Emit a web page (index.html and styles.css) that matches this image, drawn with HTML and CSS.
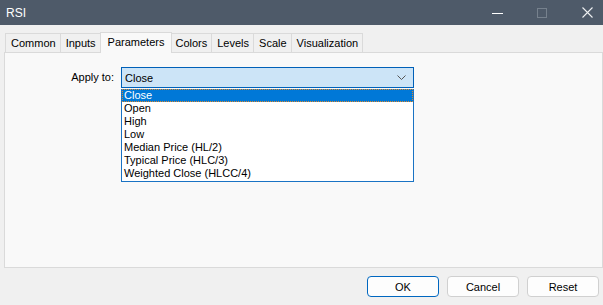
FILE: index.html
```html
<!DOCTYPE html>
<html lang="en">
<head>
    <meta charset="UTF-8">
    <title>RSI</title>
    <link rel="stylesheet" href="styles.css">
</head>
<body>
<div class="window">
    <div class="titlebar">
        <span class="title">RSI</span>
        <div class="controls">
            <span class="ctl ctl-min"></span>
            <span class="ctl ctl-max"></span>
            <svg class="ctl-close" width="11" height="11" viewBox="0 0 11 11">
                <path d="M0.5 0.5 L10.5 10.5 M10.5 0.5 L0.5 10.5" stroke="#eef0f2" stroke-width="1.1" fill="none"/>
            </svg>
        </div>
    </div>

    <div class="tabs">
        <div class="tab">Common</div>
        <div class="tab">Inputs</div>
        <div class="tab active">Parameters</div>
        <div class="tab">Colors</div>
        <div class="tab">Levels</div>
        <div class="tab">Scale</div>
        <div class="tab">Visualization</div>
    </div>

    <div class="panel">
        <div class="field">
            <label class="field-label">Apply to:</label>
            <div class="combo">
                <div class="combo-box">
                    <span>Close</span>
                    <svg class="chevron" width="9" height="5" viewBox="0 0 9 5">
                        <path d="M0.5 0.5 L4.5 4.5 L8.5 0.5" stroke="#555" stroke-width="1" fill="none"/>
                    </svg>
                </div>
                <ul class="combo-list">
                    <li class="selected">Close</li>
                    <li>Open</li>
                    <li>High</li>
                    <li>Low</li>
                    <li>Median Price (HL/2)</li>
                    <li>Typical Price (HLC/3)</li>
                    <li>Weighted Close (HLCC/4)</li>
                </ul>
            </div>
        </div>
    </div>

    <div class="footer">
        <button class="btn btn-default">OK</button>
        <button class="btn">Cancel</button>
        <button class="btn">Reset</button>
    </div>
</div>
</body>
</html>
```

FILE: styles.css
```css
body {
    margin: 0;
    padding: 0;
    font-family: "Liberation Sans", Arial, sans-serif;
    font-size: 11px;
    color: #000;
    background: #f0f0f0;
}

.window {
    width: 603px;
    height: 305px;
    display: flex;
    flex-direction: column;
    background: #f0f0f0;
    overflow: hidden;
}

.titlebar {
    height: 25px;
    background: #4e5a69;
    display: flex;
    align-items: center;
    justify-content: space-between;
    flex-shrink: 0;
}

.title {
    color: #fff;
    font-size: 12px;
    margin-left: 6px;
}

.controls {
    display: flex;
    align-items: center;
    margin-right: 10px;
}

.ctl {
    display: block;
}

.ctl-min {
    width: 11px;
    height: 1px;
    background: #fff;
    margin-right: 34px;
    margin-top: 2px;
}

.ctl-max {
    width: 8px;
    height: 8px;
    border: 1px solid #76818d;
    margin-right: 35px;
}

.ctl-close {
    display: block;
}

.tabs {
    display: flex;
    align-items: flex-end;
    height: 27px;
    padding-left: 5px;
    flex-shrink: 0;
}

.tab {
    height: 18px;
    line-height: 18px;
    padding: 0 4px 0 5px;
    border: 1px solid #dadada;
    border-bottom: none;
    border-left: none;
    background: #f0f0f0;
    white-space: nowrap;
}

.tab:first-child {
    border-left: 1px solid #dadada;
}

.tab.active {
    height: 20px;
    line-height: 18px;
    padding: 0 7px;
    margin: 0 -2px -1px -1px;
    border-left: 1px solid #dadada;
    background: #f9f9f9;
    position: relative;
    z-index: 1;
}

.panel {
    height: 214px;
    margin: 0 0 0 4px;
    border: 1px solid #dadada;
    background: #f9f9f9;
    flex-shrink: 0;
}

.field {
    display: flex;
    align-items: flex-start;
    margin-top: 14px;
}

.field-label {
    width: 109px;
    text-align: right;
    line-height: 21px;
    margin-right: 7px;
}

.combo {
    width: 293px;
}

.combo-box {
    height: 19px;
    border: 1px solid #0060b8;
    background: #cce4f7;
    display: flex;
    align-items: center;
    justify-content: space-between;
    padding: 0 7px 0 3px;
}

.chevron {
    display: block;
}

.combo-list {
    list-style: none;
    margin: 0;
    padding: 0;
    border: 1px solid #1a73c4;
    border-top: none;
    background: #fff;
    height: 92px;
}

.combo-list li {
    height: 13px;
    line-height: 13px;
    padding-left: 2px;
}

.combo-list li.selected {
    background: #0078d7;
    color: #fff;
    outline: 1px dotted #e0892a;
    outline-offset: -1px;
    margin-top: 1px;
}

.footer {
    display: flex;
    justify-content: flex-end;
    gap: 8px;
    padding: 8px 4px 0 0;
}

.btn {
    width: 72px;
    height: 21px;
    font-family: "Liberation Sans", Arial, sans-serif;
    font-size: 11px;
    color: #000;
    background: #fdfdfd;
    border: 1px solid #d0d0d0;
    border-radius: 4px;
    padding: 0;
}

.btn-default {
    border-color: #0067c0;
}
```
